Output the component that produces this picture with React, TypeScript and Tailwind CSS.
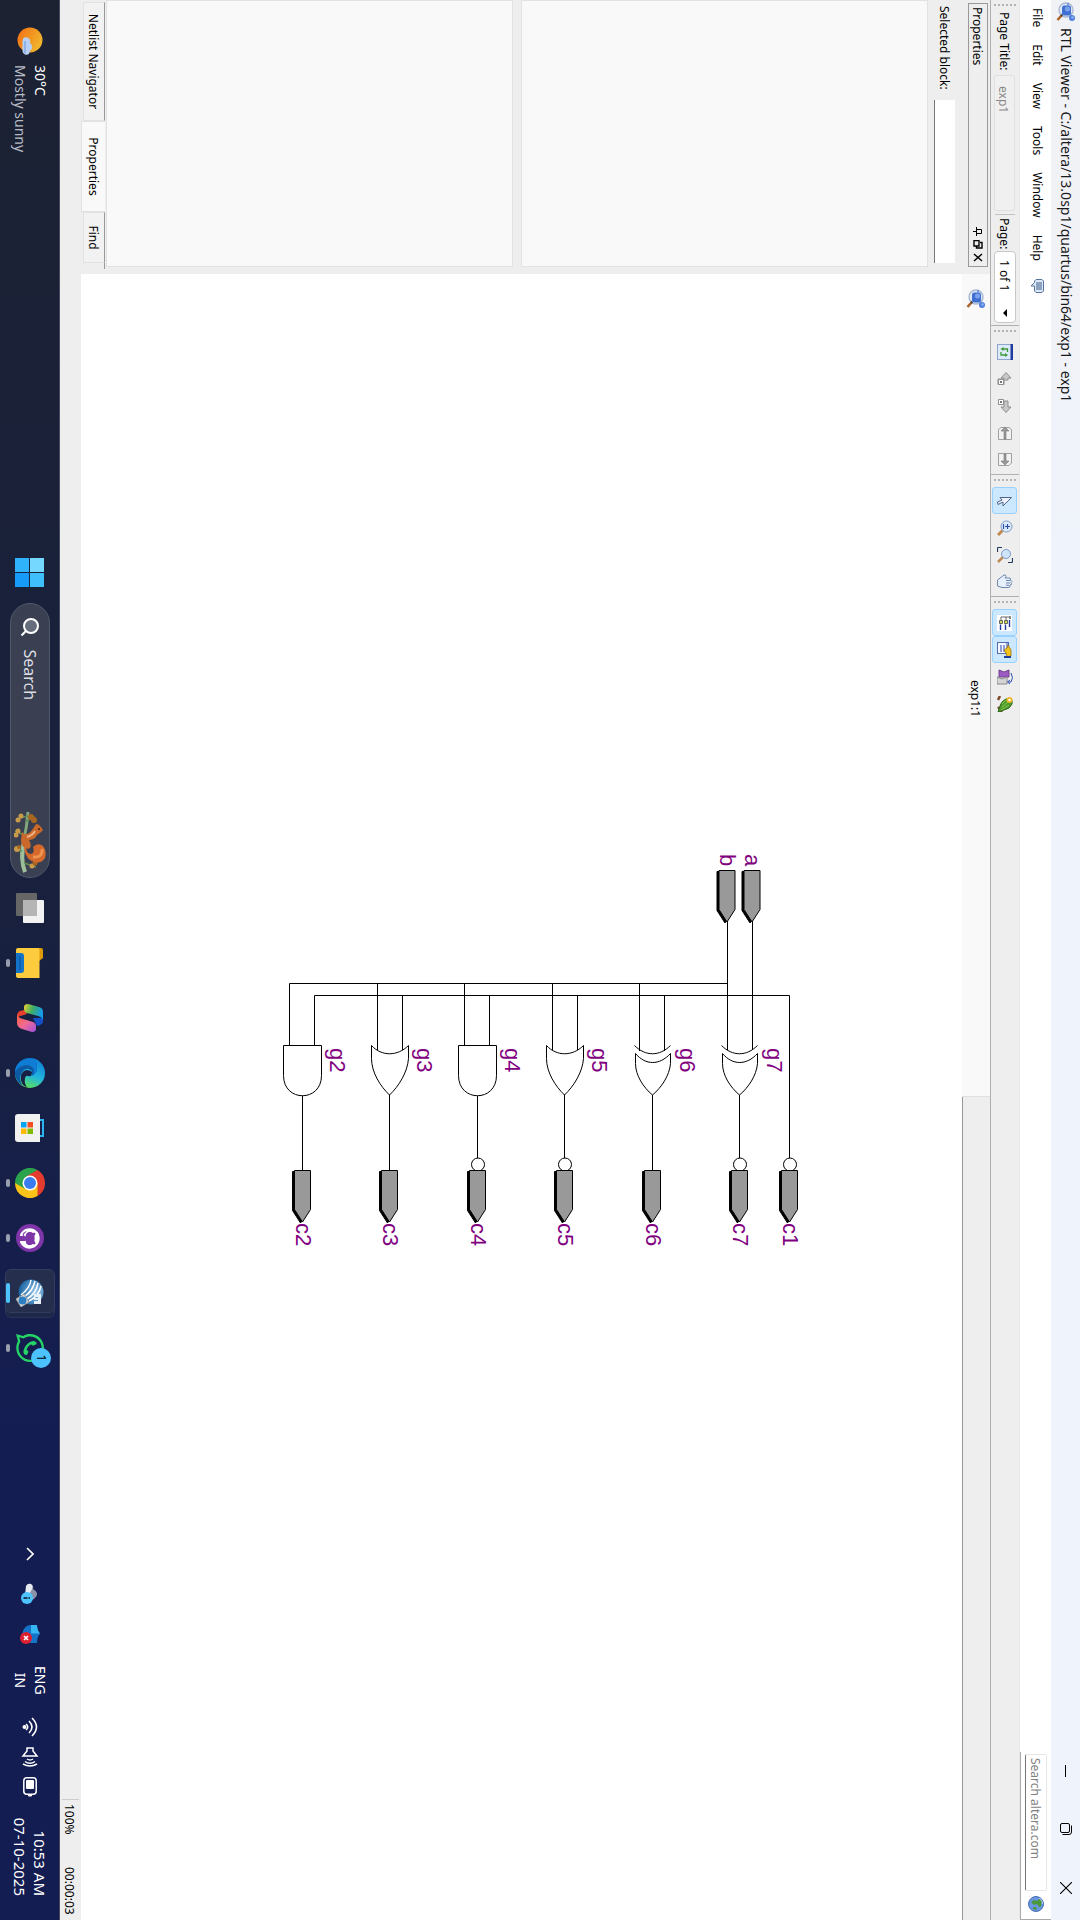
import React from "react";
import { FaGithub, FaWhatsapp } from "react-icons/fa";

type Kind = "and" | "or" | "xor";
type Gate = { name: string; out: string; kind: Kind; y: number; top: number; bottom: number; inverted: boolean };

const gates: Gate[] = [
  { name: "g7", out: "c7", kind: "xor", y: 340.5, top: 327.5, bottom: 352.5, inverted: true },
  { name: "g6", out: "c6", kind: "xor", y: 427.5, top: 415.5, bottom: 440.5, inverted: false },
  { name: "g5", out: "c5", kind: "or", y: 515.5, top: 502.5, bottom: 527.5, inverted: true },
  { name: "g4", out: "c4", kind: "and", y: 602.5, top: 590.5, bottom: 615.5, inverted: true },
  { name: "g3", out: "c3", kind: "or", y: 690.5, top: 677.5, bottom: 702.5, inverted: false },
  { name: "g2", out: "c2", kind: "and", y: 777.5, top: 765.5, bottom: 790.5, inverted: false },
];

function Pin({ x, y }: { x: number; y: number }) {
  const shape = "M0 -8H39L51.500 0L39 8H0Z";
  return (
    <g transform={`translate(${x} ${y})`}>
      <path d={shape} fill="#000" stroke="#000" transform="translate(1 2)" />
      <path d={shape} fill="#999" stroke="#000" />
    </g>
  );
}

function GateShape({ kind, y }: { kind: Kind; y: number }) {
  return (
    <g transform={`translate(1045.500 ${y})`} fill="#fff" stroke="#000">
      {kind === "and" && <path d="M0 -19H30C57 -19 57 19 30 19H0Z" />}
      {kind === "or" && <path d="M0 -19H13C27 -18 41 -9 49.500 0C41 9 27 18 13 18H0C11 8 11 -8 0 -19Z" />}
      {kind === "xor" && (
        <>
          <path d="M0 -18C11 -7 11 7 0 18" fill="none" />
          <path d="M8 -18H18C30 -17 42 -9 49.500 0C42 9 30 17 18 17H8C20 7 20 -7 8 -18Z" />
        </>
      )}
    </g>
  );
}

function Schematic() {
  return (
    <svg viewBox="840 268 420 540" width="420" height="540" className="absolute left-[566px] top-[150px]" fontFamily="Liberation Sans, Arial, sans-serif" fontSize="22" role="img" aria-label="exp1 netlist">
      <g stroke="#000" fill="none">
        <path d="M921 327.500H1050M921 352.500H1050M983.500 352.500V790.500M995.500 290.500V765.500M995.500 290.500H1158" />
        {gates.slice(1).map((g) => (
          <path key={g.name} d={`M995.500 ${g.top}H1051M983.500 ${g.bottom}H1051`} />
        ))}
        {gates.map((g) => (
          <path key={g.name} d={`M1094 ${g.y}H${g.inverted ? 1158 : 1170}`} />
        ))}
      </g>
      {gates.map((g) => (
        <g key={g.name}>
          <GateShape kind={g.kind} y={g.y} />
          {g.inverted && <circle cx="1164.500" cy={g.y - 0.5} r="6.500" fill="#fff" stroke="#000" />}
          <Pin x={1170.5} y={g.y} />
          <text x="1048" y={g.y - 27} fill="#800080">{g.name}</text>
          <text x="1223" y={g.y + 7} fill="#800080">{g.out}</text>
        </g>
      ))}
      <circle cx="1164.500" cy="290" r="6.500" fill="#fff" stroke="#000" />
      <Pin x={1170.5} y={290.5} />
      <text x="1223" y="297" fill="#800080">c1</text>
      <Pin x={870.5} y={328} />
      <Pin x={870.5} y={353} />
      <text x="854" y="335" fill="#800080">a</text>
      <text x="854" y="360" fill="#800080">b</text>
    </svg>
  );
}

function ViewerIcon() {
  return (
    <svg viewBox="0 0 20 20" className="size-5 shrink-0">
      <circle cx="8" cy="10" r="7" fill="#dfe8f5" stroke="#a9b8d0" strokeWidth="1.400" />
      <path d="M13.500 14.500L18 18.500" stroke="#a8642a" strokeWidth="2.600" />
      <path d="M12.500 13.500L14 15" stroke="#444" strokeWidth="2" />
      <rect x="3.500" y="5" width="10" height="9" rx="2.500" fill="#3f6fd0" />
      <rect x="4.500" y="6" width="5" height="5" rx="2" fill="#7ba0ec" />
      <path d="M13 5h3M1 8h3" stroke="#3f6fd0" />
      <circle cx="16" cy="4" r="3" fill="#4f7fdc" />
      <circle cx="15.500" cy="3.500" r="1.300" fill="#8fb1f2" />
    </svg>
  );
}

function Icon16({ children }: { children: React.ReactNode }) {
  return <svg viewBox="0 0 16 16" className="size-4 shrink-0" fill="none">{children}</svg>;
}

function Tool({ label, active, children }: { label: string; active?: boolean; children: React.ReactNode }) {
  return (
    <button
      type="button"
      aria-label={label}
      className={
        active
          ? "flex h-[25px] w-[27px] items-center justify-center rounded-[3px] border border-[#99d1ff] bg-[#cce8ff]"
          : "flex h-[25px] w-[27px] items-center justify-center rounded-[3px] border border-transparent"
      }
    >
      <Icon16>{children}</Icon16>
    </button>
  );
}

function Handle() {
  return (
    <div className="mx-1 flex h-[22px] w-[3px] flex-col justify-between">
      {[0, 1, 2, 3, 4, 5].map((i) => (
        <span key={i} className="size-[2px] bg-[#b4b4b4]" />
      ))}
    </div>
  );
}

function TitleBar() {
  return (
    <header className="flex h-[29px] shrink-0 items-center bg-gradient-to-r from-[#f1f2f6] from-10% to-[#eff3fb] to-30% pb-0.5 pl-0.5">
      <ViewerIcon />
      <h1 className="ml-1.5 text-sm leading-5 text-[#1a1a1a]">RTL Viewer - C:/altera/13.0sp1/quartus/bin64/exp1 - exp1</h1>
      <div className="ml-auto flex pr-0.5">
        <button type="button" aria-label="Minimize" className="flex h-[27px] w-[58px] items-center justify-center">
          <svg viewBox="0 0 12 12" className="size-3"><path d="M0 6.500H12" stroke="#000" /></svg>
        </button>
        <button type="button" aria-label="Restore" className="flex h-[27px] w-[58px] items-center justify-center">
          <svg viewBox="0 0 12 12" className="size-3" fill="none" stroke="#000">
            <rect x="0.500" y="2.500" width="9" height="9" rx="1.500" />
            <path d="M2.500 .500H9Q11.500 .500 11.500 3V9.500" />
          </svg>
        </button>
        <button type="button" aria-label="Close" className="flex h-[27px] w-[60px] items-center justify-center">
          <svg viewBox="0 0 12 12" className="size-3"><path d="M0 0L12 12M12 0L0 12" stroke="#000" strokeWidth="1.100" /></svg>
        </button>
      </div>
    </header>
  );
}

function MenuBar() {
  return (
    <nav className="flex h-[32px] shrink-0 items-center border-b border-[#e8e8e8] bg-white pl-2">
      <div className="flex items-center gap-[17px] pb-1 text-xs">
        {["File", "Edit", "View", "Tools", "Window", "Help"].map((m) => (
          <button type="button" key={m}>{m}</button>
        ))}
        <button type="button" aria-label="Feedback">
          <Icon16>
            <path d="M3 1.500H13L14.500 3V9L13 10.500H8V14L4.500 10.500H3L1.500 9V3Z" fill="#dce8fa" stroke="#56749c" />
            <path d="M4 4h8M4 6h8M4 8h8" stroke="#3c5c86" />
          </Icon16>
        </button>
      </div>
      <div className="ml-auto flex h-[31px] w-[168px] items-center border-b border-r border-[#aaa] pl-0.5">
        <input aria-label="Search altera.com" placeholder="Search altera.com" className="h-[22px] w-[137px] rounded-xs border border-b-[#777] border-[#e6e6e6] bg-white px-[3px] text-xs outline-none placeholder:text-[#808080]" />
        <button type="button" aria-label="Open altera.com" className="ml-[5px]">
          <Icon16>
            <circle cx="8" cy="8" r="7.500" fill="#6b96e2" stroke="#476fb5" />
            <path d="M5 2C8 3 12 2 11 5L8 7L9 10L6 13L4 10L5 7L3 5Z" fill="#4a9a3c" />
            <path d="M11 8L14 7L13 11L11 11Z" fill="#4a9a3c" />
            <path d="M2 5Q4 1 8 1.500" stroke="#b9d3fa" />
          </Icon16>
        </button>
      </div>
    </nav>
  );
}

function ToolBar() {
  return (
    <div className="flex h-[29px] shrink-0 items-center border-b border-[#b0b0b0] bg-[#eee] text-xs">
      <Handle />
      <div className="flex items-center pl-px">
        <label htmlFor="page-title" className="w-[63px] whitespace-nowrap pt-0.5">Page Title:</label>
        <input id="page-title" disabled value="exp1" readOnly className="h-[21px] w-[136px] rounded-xs border border-[#e0e0e0] bg-[#f0f0f0] pl-2.5 pt-0.5 text-xs text-[#888]" />
        <span className="mx-[3px] h-5 w-px bg-[#c4c4c4]" />
        <label htmlFor="page-number" className="w-[33px] pt-0.5">Page:</label>
        <div className="relative">
          <select id="page-number" className="h-[22px] w-[72px] appearance-none rounded-[4px] border border-[#c8c8c8] bg-white pl-2 pt-0.5 text-xs outline-none">
            <option>1 of 1</option>
          </select>
          <svg viewBox="0 0 8 4" className="pointer-events-none absolute right-1.5 top-[9px] h-1 w-2"><path d="M0 0H8L4 4Z" /></svg>
        </div>
      </div>
      <span className="ml-[2px] h-[29px] w-px bg-[#b0b0b0]" />
      <Handle />
      <div className="flex px-[1px]">
        <Tool label="Refresh">
          <rect x=".500" y=".500" width="15" height="15" fill="#dceafc" stroke="#8ca6cc" />
          <path d="M0 0H16V2.500H0Z" fill="#1f3b9c" />
          <path d="M8 5.500H5V10.500M8 12H11V7" stroke="#3d9b35" strokeWidth="1.300" />
          <path d="M3 9.500L5 12.500L7 9.500ZM9 8L11 5L13 8Z" fill="#3d9b35" />
        </Tool>
        <Tool label="Back">
          <path d="M1.500 7L7 2V5H9V9H13.500V15H8V9H7V12Z" fill="#c8c8c8" stroke="#8e8e8e" />
          <path d="M8.500 9.500H13.500V14.500H8.500Z" fill="#fff" stroke="#8e8e8e" /><path d="M10 11h2v2h-2z" fill="#777" />
        </Tool>
        <Tool label="Forward">
          <path d="M14.500 7L9 2V5H3V9H9V12Z" fill="#c8c8c8" stroke="#8e8e8e" />
          <path d="M1.500 9.500H6.500V14.500H1.500Z" fill="#fff" stroke="#8e8e8e" /><path d="M3 11h2v2H3z" fill="#777" />
        </Tool>
        <Tool label="Previous page">
          <path d="M4.500 1.500H14.500V14.500H4.500L2.500 12V4Z" fill="#f2f2f2" stroke="#a0a0a0" />
          <path d="M14 7H6V4L2 8L6 12V9H14Z" fill="#999" stroke="#777" strokeWidth=".600" />
        </Tool>
        <Tool label="Next page">
          <path d="M1.500 1.500H11L13.500 4V14.500H1.500Z" fill="#f2f2f2" stroke="#a0a0a0" />
          <path d="M2 7H9V4L13 8L9 12V9H2Z" fill="#999" stroke="#777" strokeWidth=".600" />
        </Tool>
      </div>
      <span className="h-[29px] w-px bg-[#b0b0b0]" />
      <Handle />
      <div className="flex px-px">
        <Tool label="Select" active>
          <path d="M4.500 1.500L13 10H9L11.500 15L9 15.500L7 11L4.500 13Z" fill="#eef3fc" stroke="#50648a" />
        </Tool>
        <Tool label="Zoom">
          <path d="M10 10L15 15" stroke="#c08a55" strokeWidth="3" />
          <circle cx="6.500" cy="6.500" r="5.500" fill="#dcebfc" stroke="#7d9cc4" />
          <path d="M6.500 3V8M4 5.500H9M4 9.500H9" stroke="#2b4fa8" strokeWidth="1.200" />
        </Tool>
        <Tool label="Fit in window">
          <path d="M10 10L15 15" stroke="#c08a55" strokeWidth="2.500" />
          <circle cx="7" cy="7" r="4.500" fill="#cfe3fb" stroke="#7d9cc4" />
          <path d="M11 15.500H15.500M.500 5V.500M.500 .500H0M11 .500H15.500V0M0 15.500V11" stroke="none" />
          <path d="M.500 11V15.500M11 .500H15.500M15.500 .500V5M.500 15.500H5" stroke="#23395c" strokeWidth="1.200" />
        </Tool>
        <Tool label="Pan">
          <path d="M6 15.500L1 9Q.500 7 2.500 7L4 8V3Q5 1.500 6 3L6.500 2Q7.500 0 8.500 2L9.500 1.500Q11 1 11 3L12 3Q13.500 3 13.500 5V11L12 15.500Z" fill="#e6effc" stroke="#6f87ad" />
          <path d="M6.500 3V7M9 3V7M11.200 4V7" stroke="#6f87ad" />
        </Tool>
      </div>
      <span className="h-[29px] w-px bg-[#b0b0b0]" />
      <Handle />
      <div className="flex pl-px">
        <Tool label="Netlist navigator" active>
          <path d="M0 1H16V16H0Z" fill="#fff" />
          <path d="M2 3V12H6M2 7H6" stroke="#666" />
          <path d="M1 3h3" stroke="#888" strokeWidth="2" />
          <path d="M5.500 5.500h3v3h-3zM5.500 10.500h3v3h-3z" fill="#cfdc5a" stroke="#444" strokeWidth=".800" />
          <path d="M5 3.500H12M9.500 7.500H15M9.500 12.500H15" stroke="#23389c" strokeWidth="1.400" />
        </Tool>
        <Tool label="Properties pane" active>
          <rect x=".500" y="4.500" width="11" height="11" fill="#f4f7ff" stroke="#556ca8" />
          <path d="M1 6H11M3 9H10M3 12H10" stroke="#2f49a8" />
          <path d="M3 5L8 2H14L15 6L11 7L8 9L6 6Z" fill="#f3c21b" stroke="#8a6506" strokeWidth=".700" />
          <path d="M14 2H16V9H14Z" fill="#1f3b9c" />
        </Tool>
        <Tool label="Compare">
          <path d="M1 4H8V14H1L3 9Z" fill="#9c5cc4" stroke="#70408f" />
          <path d="M8 6H15V16H8L10 11Z" fill="#d5d5d5" stroke="#888" />
          <path d="M4 2Q9 -1 13 2V5M11 3L13 5.500L15 3" stroke="#2b50b4" />
        </Tool>
        <Tool label="Bird's eye view">
          <path d="M0 13L4 15M11 15L16 11" stroke="#7b4a2a" strokeWidth="2.500" />
          <path d="M2 3Q4 0 8 1Q13 3 14 9L16 15L10 13Q3 11 2 3Z" fill="#4d9a2c" stroke="#2f6a1c" />
          <path d="M6 5L11 11M9 4L14 12M4 7L8 11" stroke="#8ccc4a" />
          <circle cx="4" cy="3.500" r="3" fill="#f0b62a" /><circle cx="4" cy="3.500" r="1.200" fill="#fff" />
        </Tool>
      </div>
    </div>
  );
}

function PropertiesPanel() {
  return (
    <aside className="flex w-[274px] shrink-0 flex-col bg-[#eee] pt-0.5 text-xs">
      <div className="ml-[3px] mr-[7px] flex h-5 items-center border border-[#999] pl-[3px] pr-1">
        <h2 className="pt-0.5">Properties</h2>
        <div className="ml-auto flex gap-1">
          <button type="button" aria-label="Pin"><svg viewBox="0 0 9 10" className="h-2.5 w-[9px]" fill="none" stroke="#000"><path d="M2.500 6V1.500H6.500V6M0 6.500H9M4.500 7V10" /></svg></button>
          <button type="button" aria-label="Float"><svg viewBox="0 0 9 10" className="h-2.5 w-[9px]" fill="none" stroke="#000"><path d="M2.500 3V1H8V6.500H6M.500 4H6V9H.500Z" strokeWidth="1.400" /></svg></button>
          <button type="button" aria-label="Close pane"><svg viewBox="0 0 9 10" className="h-2.5 w-[9px]"><path d="M1 1L8 9M8 1L1 9" stroke="#000" strokeWidth="1.400" /></svg></button>
        </div>
      </div>
      <div className="mr-[11px] mt-[13px] flex items-center pl-1.5">
        <label htmlFor="selected-block" className="w-[94px]">Selected block:</label>
        <input id="selected-block" className="h-[21px] min-w-0 flex-1 border-b border-[#777] bg-white px-1 outline-none" />
      </div>
      <div className="mr-[7px] mt-1.5 flex-1 border border-[#e2e2e2] bg-[#f9f9f9]" />
      <div className="mr-[7px] mt-2 flex-1 border border-[#e2e2e2] bg-[#f9f9f9]" />
      <div className="mr-[5px] flex h-[25px] items-start" role="tablist">
        <span className="w-0.5" />
        <button type="button" role="tab" aria-selected="false" className="mt-px h-[22px] w-[119px] border border-t-[#999] border-[#e2e2e2] bg-[#f2f2f2] pt-0.5">Netlist Navigator</button>
        <button type="button" role="tab" aria-selected="true" className="mt-px h-6 w-[91px] border border-t-0 border-[#e2e2e2] bg-[#f9f9f9] pt-px">Properties</button>
        <button type="button" role="tab" aria-selected="false" className="mt-px h-[22px] w-[51px] border border-t-[#999] border-[#e2e2e2] bg-[#f2f2f2] pt-0.5">Find</button>
        <span className="mt-px flex-1 border-t border-[#999]" />
      </div>
    </aside>
  );
}

function Running({ active }: { active?: boolean }) {
  return <span className={active ? "absolute bottom-[5px] h-1 w-5 rounded-full bg-[#4cc2ff]" : "absolute bottom-[5px] h-1 w-2 rounded-full bg-[#9a9fb0]"} />;
}

function TaskItem({ label, state, children }: { label: string; state?: "running" | "active"; children: React.ReactNode }) {
  return (
    <button type="button" aria-label={label} className="relative flex h-[58px] w-[55px] items-center justify-center">
      {state === "active" && (
        <>
          <span className="absolute left-[7px] top-1 h-[50px] w-[45px] rounded-md border border-[#2a3458] bg-[#1d2747]" />
          <span className="absolute left-[3px] top-1 h-[50px] w-11 rounded-md border border-[#333c5c] bg-[#252e4d]" />
        </>
      )}
      <span className="relative flex">{children}</span>
      {state && <Running active={state === "active"} />}
    </button>
  );
}

function TaskBar() {
  return (
    <footer className="grid h-[60px] shrink-0 grid-cols-[1fr_auto_1fr] items-center border-t border-[#454b5c] bg-gradient-to-r from-[#1c2232] via-[#18203f] via-50% to-[#141d52] to-75% pb-px text-white">
      <button type="button" className="flex items-center gap-[9px] pl-[27px] text-left">
        <svg viewBox="0 0 29 26" className="h-[26px] w-[29px]">
          <defs><linearGradient id="sun" x1="0" y1="1" x2=".5" y2="0"><stop stopColor="#f36c12" /><stop offset="1" stopColor="#f0b42c" /></linearGradient></defs>
          <circle cx="13" cy="13" r="12.500" fill="url(#sun)" />
          <path d="M14 20.500Q9 20 10.500 15.500Q12 12 16 13Q20 8.500 24 13Q29 14 27.500 18Q26.500 20.500 24 20.500Z" fill="#b6cff3" />
          <path d="M14 18H26" stroke="#8fb1e6" strokeWidth="2" />
        </svg>
        <span className="flex flex-col text-sm leading-5"><span>30°C</span><span className="text-[#b9bcc6]">Mostly sunny</span></span>
      </button>

      <div className="flex items-center">
        <TaskItem label="Start">
          <svg viewBox="0 0 29 29" className="size-[29px]">
            <defs><linearGradient id="win" x1="1" y1="0" x2="0" y2="1"><stop stopColor="#5bd0ff" /><stop offset="1" stopColor="#169cf8" /></linearGradient></defs>
            <path d="M0 0H14V14H0ZM15 0H29V14H15ZM0 15H14V29H0ZM15 15H29V29H15Z" fill="#3fc0fd" />
            <path d="M0 15H14V29H0Z" fill="#2fb4fb" /><path d="M15 15H29V29H15Z" fill="#169cf8" /><path d="M0 0H14V14H0Z" fill="#74d8ff" />
          </svg>
        </TaskItem>
        <div className="mx-[3px] flex h-10 w-[275px] items-center rounded-full border border-[#50586c] bg-[#3a4051] pl-[14px] pr-1">
          <svg viewBox="0 0 18 18" className="size-[18px] shrink-0" fill="#666d7c" stroke="#fff" strokeWidth="2"><circle cx="8" cy="8" r="7" /><path d="M13 13L17.500 17.500" /></svg>
          <input aria-label="Search" placeholder="Search" className="ml-3.5 min-w-0 flex-1 bg-transparent text-base outline-none placeholder:text-[#dcdee4]" />
          <svg viewBox="0 0 62 32" className="h-8 w-[62px] shrink-0">
            <path d="M1 18Q15 19 28 22Q46 27 61 21" fill="none" stroke="#7fa77b" strokeWidth="3" />
            <path d="M32 22Q48 26 61 21" fill="none" stroke="#9dc09b" strokeWidth="4" />
            <path d="M5 18L8 30M24 22L20 31M40 24L38 31M10 20L6 11M52 22L56 10" fill="none" stroke="#638b52" strokeWidth="1.500" />
            <g fill="#c99a4a"><circle cx="5" cy="25" r="2.500" /><circle cx="9" cy="28" r="2.500" /><circle cx="20" cy="28" r="2.500" /><circle cx="24" cy="30" r="2.500" /><circle cx="38" cy="29" r="3" /><circle cx="55" cy="14" r="2.500" /></g>
            <g fill="#a86620"><circle cx="6" cy="15" r="3" /><circle cx="9" cy="12" r="3" /><circle cx="52" cy="11" r="2.500" /><circle cx="36" cy="27" r="2" /></g>
            <path d="M13 10Q13 7 16 5L19 3L22 6Q23 9 27 11Q29 14 29 17Q36 13 38 18Q37 25 29 25L21 24Q25 21 22 17Q20 14 13 10Z" fill="#c8682a" />
            <path d="M35 20Q43 20 43 15Q42 11 36 13Q31 8 35 3Q40 -1 47 1Q53 5 51 12Q49 20 37 22Z" fill="#d4692b" />
            <path d="M38 4Q47 3 46 13" fill="none" stroke="#ee9350" strokeWidth="3" />
            <path d="M20 11Q24 13 26 19" fill="none" stroke="#f0b184" strokeWidth="2" />
            <circle cx="18" cy="7" r="1" fill="#321" />
          </svg>
        </div>
        <TaskItem label="Task view">
          <svg viewBox="0 0 30 28" className="h-7 w-[30px]"><rect x="7" width="23" height="21" rx="1" fill="#f2f2f2" /><rect y="7" width="23" height="21" rx="1" fill="#666" /><path d="M7 7H23V21H7Z" fill="#b5b5b5" /></svg>
        </TaskItem>
        <TaskItem label="File Explorer" state="running">
          <svg viewBox="0 0 30 27" className="h-[27px] w-[30px]"><path d="M0 2Q0 0 2 0H10L13 4V8H0Z" fill="#dc9a08" /><path d="M0 5Q0 3.500 2 3.500H30V24Q30 27 28 27H2Q0 27 0 25Z" fill="#fdcc3e" /><path d="M5 27V22Q5 19 8 19H22Q25 19 25 22V27Z" fill="#1373c8" /><path d="M8 23H22" stroke="#0b4f96" /></svg>
        </TaskItem>
        <TaskItem label="Copilot">
          <svg viewBox="0 0 28 26" className="h-[26px] w-7">
            <defs>
              <linearGradient id="cop1" x1="0" y1="1" x2=".3" y2="0"><stop stopColor="#f2d22c" /><stop offset=".5" stopColor="#3fae62" /><stop offset="1" stopColor="#159ce8" /></linearGradient>
              <linearGradient id="cop2" x1="0" y1="1" x2="1" y2="0"><stop stopColor="#f8603c" /><stop offset=".5" stopColor="#f06a94" /><stop offset="1" stopColor="#a24fe0" /></linearGradient>
            </defs>
            <path d="M14 0H18Q21 1 22 6L14 10Z" fill="#1450c8" />
            <path d="M6 19L10 16L13 26Q8 26 7 23Z" fill="#e8402c" />
            <path d="M0 15L3 4Q4 0 8 0H16Q13 1 12 5L9 16Q8 19 5 19H3Q0 19 0 15Z" fill="url(#cop1)" />
            <path d="M10 26Q14 25 15 20L18 10Q19 7 22 7H25Q28 7 28 11L25 21Q23 26 19 26Z" fill="url(#cop2)" />
          </svg>
        </TaskItem>
        <TaskItem label="Edge" state="running">
          <svg viewBox="0 0 30 30" className="size-[30px]">
            <defs>
              <linearGradient id="edge1" x1="0" y1=".3" x2="1" y2=".7"><stop stopColor="#0f7fda" /><stop offset=".55" stopColor="#22b6dc" /><stop offset="1" stopColor="#64e64c" /></linearGradient>
            </defs>
            <circle cx="15" cy="15" r="15" fill="url(#edge1)" />
            <path d="M0 15Q1 8 9 8Q17 8 18 14Q13 11 11 16Q10 21 16 24Q23 26 28 22Q22 31 13 30Q1 28 0 15Z" fill="#0c59a4" />
            <path d="M0 15Q1 8 9 8Q15 8 17 12Q9 9 7 17Q7 26 14 30Q2 29 0 15Z" fill="#0f7cd6" />
            <path d="M14 13Q19 13 18 17Q17 19 20 20Q26 21 29 18Q28 23 22 24Q14 25 12 19Q12 15 14 13Z" fill="#182145" />
          </svg>
        </TaskItem>
        <TaskItem label="Microsoft Store">
          <svg viewBox="0 0 30 30" className="size-[30px]"><path d="M7 6V2H23V6" fill="none" stroke="#2ab4f0" strokeWidth="2" /><path d="M1 5H29V27Q29 30 26 30H4Q1 30 1 27Z" fill="#f1f1f1" /><path d="M9 12H14.500V17.500H9Z" fill="#f25022" /><path d="M15.500 12H21V17.500H15.500Z" fill="#7fba00" /><path d="M9 18.500H14.500V24H9Z" fill="#00a4ef" /><path d="M15.500 18.500H21V24H15.500Z" fill="#ffb900" /></svg>
        </TaskItem>
        <TaskItem label="Chrome" state="running">
          <svg viewBox="0 0 30 30" className="size-[30px]"><path d="M15 15L2 7.500A15 15 0 0 1 28 7.500Z" fill="#e33b2e" /><path d="M15 15L28 7.500A15 15 0 0 1 15 30Z" fill="#fcc418" /><path d="M15 15V30A15 15 0 0 1 2 7.500Z" fill="#2ba24c" /><path d="M15 7.500H28L21.500 18.800Z" fill="#fcc418" /><path d="M2 7.500L8.500 18.800L15 7.500Z" fill="#e33b2e" /><path d="M8.500 18.800L15 30L21.500 18.800Z" fill="#2ba24c" /><circle cx="15" cy="15" r="7.500" fill="#fff" /><circle cx="15" cy="15" r="6" fill="#3a7df0" /></svg>
        </TaskItem>
        <TaskItem label="GitHub Desktop" state="running">
          <span className="flex size-7 items-center justify-center rounded-full bg-[#7d35a8]"><FaGithub className="size-[21px]" /></span>
        </TaskItem>
        <TaskItem label="Quartus II" state="active">
          <svg viewBox="0 0 28 28" className="size-7">
            <defs><radialGradient id="q" cx=".5" cy=".3" r=".7"><stop stopColor="#9ecdf0" /><stop offset="1" stopColor="#15619f" /></radialGradient></defs>
            <circle cx="13" cy="13" r="12.500" fill="url(#q)" />
            <path d="M1 13Q9 14 16 23M2 9Q12 11 18 20M4 6Q15 8 20 17M7 3Q17 5 22 15" fill="none" stroke="#fff" strokeWidth="1.500" />
            <path d="M15 3H25V10H22V6H21V10H19V6H18V10H15Z" fill="#e6f1fa" />
            <path d="M15 20L23 15L28 23L20 28Z" fill="#ddd" stroke="#999" /><circle cx="21.500" cy="21.500" r="4" fill="#2b7fc2" />
          </svg>
        </TaskItem>
        <TaskItem label="WhatsApp" state="running">
          <FaWhatsapp className="size-[32px] text-[#25d366]" />
          <span className="absolute left-4 top-[-5px] flex size-5 items-center justify-center rounded-full bg-[#4cc2ff] text-xs text-black">1</span>
        </TaskItem>
      </div>

      <div className="flex items-center justify-end pr-6 text-sm leading-5">
        <button type="button" aria-label="Show hidden icons" className="mr-[22px]"><svg viewBox="0 0 14 8" className="h-2 w-3.5" fill="none" stroke="#fff" strokeWidth="1.600"><path d="M1 7L7 1L13 7" /></svg></button>
        <svg viewBox="0 0 21 18" className="mr-5 h-[18px] w-[21px]"><path d="M4 13Q0 12 1 8Q2 5 6 6Q10 -1 15 4Q18 6 16 10Z" fill="#8b90a6" /><path d="M3 13Q0 11 1 8Q4 5 8 8Q13 10 12 14Z" fill="#e8eaf2" /><circle cx="15" cy="12" r="6" fill="#4cc2ff" /><path d="M15 9V10.500M15 11.500V15.500" stroke="#112" strokeWidth="1.500" /></svg>
        <svg viewBox="0 0 20 20" className="mr-[22px] size-5"><path d="M1 3Q6 3 9.500 0Q13 3 19 3V9Q18 16 10 18Q1 16 1 9Z" fill="#1473c8" /><path d="M1 3Q6 3 9.500 0V9H1Z" fill="#35b5f1" /><circle cx="14" cy="14" r="6" fill="#dc2030" /><path d="M12 12L16 16M16 12L12 16" stroke="#fff" strokeWidth="1.600" /></svg>
        <div className="mr-[22px] text-center"><div>ENG</div><div>IN</div></div>
        <button type="button" aria-label="Network, volume and battery" className="mr-[21px] flex items-center gap-2.5">
          <svg viewBox="0 0 20 16" className="h-4 w-5" fill="none" stroke="#fff" strokeWidth="1.600"><path d="M1 6Q10 -3 19 6M4 9Q10 3 16 9M7 12Q10 8.500 13 12" /><circle cx="10" cy="13.500" r="1.200" fill="#fff" /></svg>
          <svg viewBox="0 0 20 18" className="h-[18px] w-5" fill="none" stroke="#fff" strokeWidth="1.500"><path d="M1 6H4L9 2V16L4 12H1Z" /><path d="M12 6Q14 9 12 12M14.500 4Q18 9 14.500 14M17 2Q21 9 17 16" /></svg>
          <svg viewBox="0 0 20 14" className="h-3.5 w-5"><rect x=".800" y=".800" width="16.500" height="12.400" rx="3" fill="none" stroke="#fff" strokeWidth="1.500" /><rect x="3" y="3" width="9" height="8" rx="1" fill="#fff" /><path d="M18 5H19Q20 7 19 9H18Z" fill="#fff" /></svg>
        </button>
        <div className="text-right text-[15px]"><div>10:53 AM</div><div>07-10-2025</div></div>
      </div>
    </footer>
  );
}

export default function App() {
  return (
    <div className="relative h-screen w-screen overflow-hidden bg-white">
      <div className="absolute left-full top-0 flex h-[100vw] w-[100vh] origin-top-left rotate-90 flex-col font-['Noto_Sans','Open_Sans',sans-serif] text-black">
        <TitleBar />
        <MenuBar />
        <ToolBar />
        <div className="flex min-h-0 flex-1">
          <PropertiesPanel />
          <main className="flex min-w-0 flex-1 flex-col bg-white">
            <div className="flex h-7 shrink-0 bg-[#eee] text-xs">
              <button type="button" className="relative flex w-1/2 items-center border-r border-[#e0e0e0] bg-[#f9f9f9] pl-[15px] pr-1">
                <ViewerIcon />
                <span className="flex-1 pr-1 pt-0.5 text-center">exp1:1</span>
              </button>
              <span className="flex-1 border-b border-[#999]" />
            </div>
            <div className="relative flex-1">
              <Schematic />
            </div>
          </main>
        </div>
        <div className="flex h-[21px] shrink-0 items-center justify-end bg-[#eee] text-xs">
          <span className="h-[17px] w-px bg-[#ccc]" />
          <span className="w-[67px] pl-1 pt-0.5">100%</span>
          <span className="w-[53px] pt-0.5">00:00:03</span>
        </div>
        <TaskBar />
      </div>
    </div>
  );
}
